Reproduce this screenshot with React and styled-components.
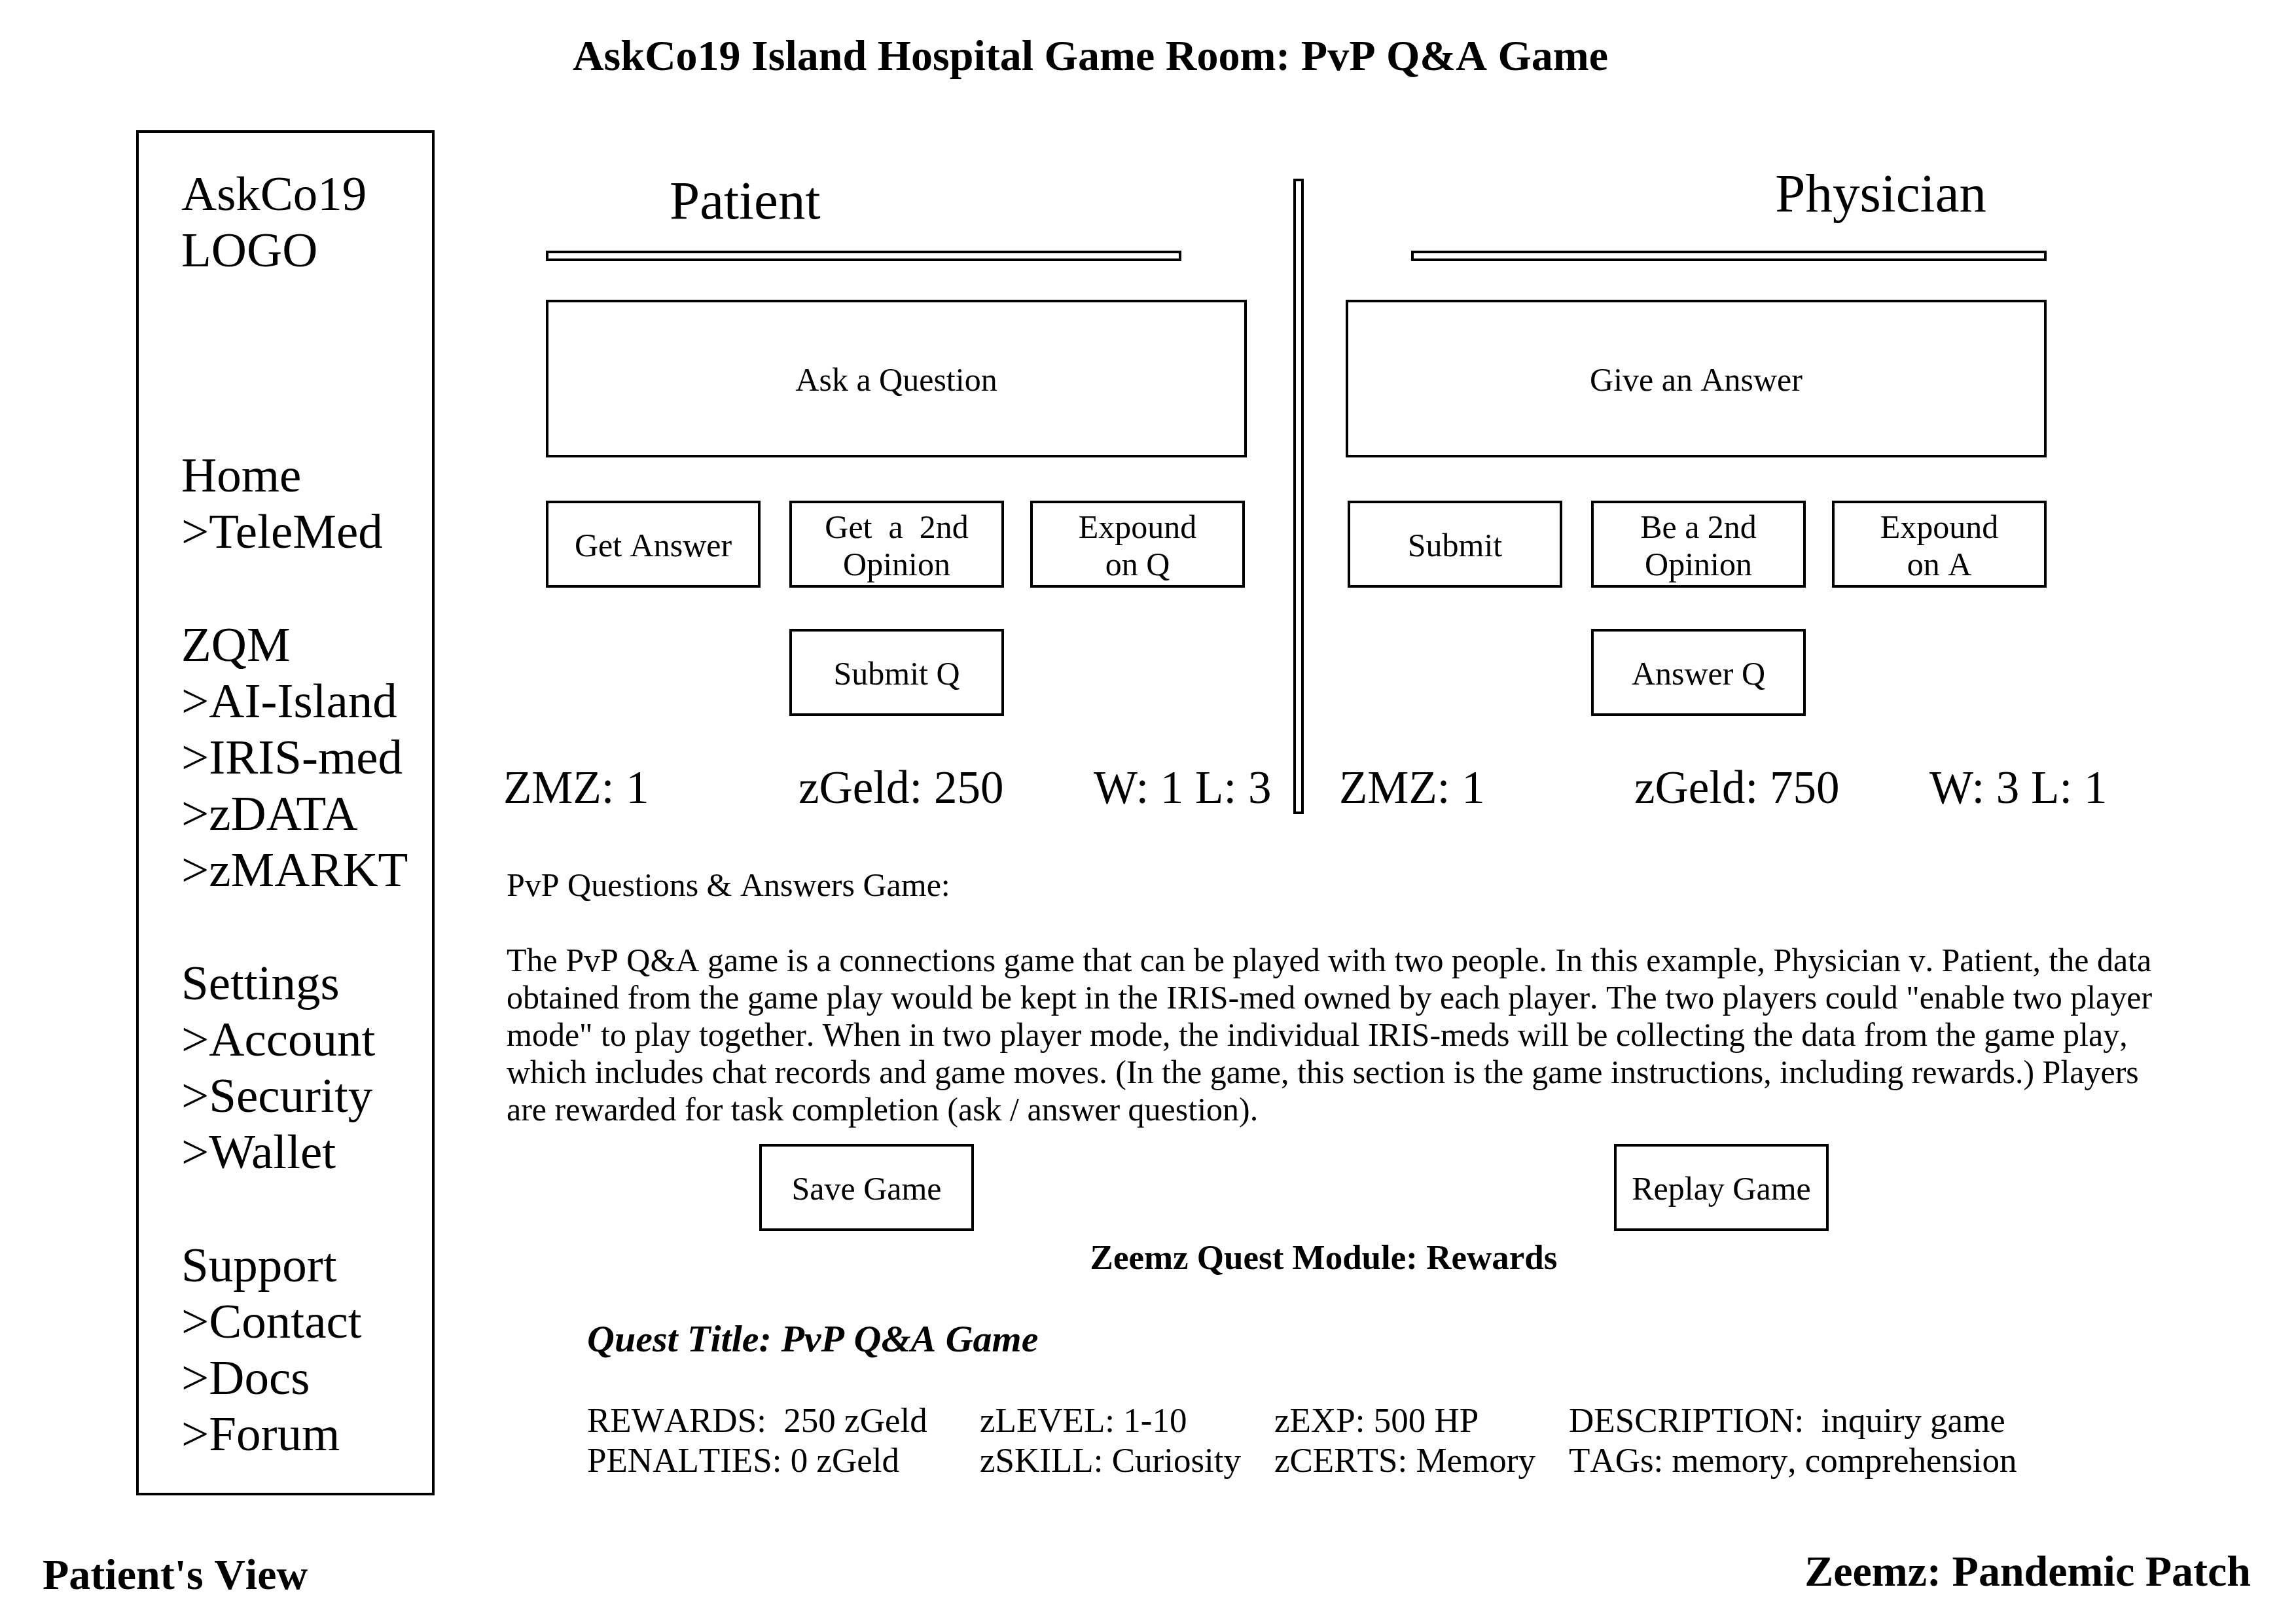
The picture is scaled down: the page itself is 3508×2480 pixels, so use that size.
import React from "react";
import styled, { createGlobalStyle } from "styled-components";

const GlobalStyle = createGlobalStyle`
  *, *::before, *::after { box-sizing: border-box; }
  body {
    margin: 0;
    background: #fff;
    color: #000;
    font-family: "Liberation Serif", "Times New Roman", serif;
    font-size: 50px;
    font-kerning: none;
    line-height: 57px;
  }
  h1, h2, h3, p, ul, dl, dd { margin: 0; padding: 0; }
`;

const Page = styled.div`
  display: flex;
  flex-direction: column;
  min-height: 100vh;
`;

const PageTitle = styled.h1`
  padding: 47px 176px 0 0;
  font-size: 66px;
  line-height: 76px;
  text-align: center;
`;

const Body = styled.div`
  display: flex;
  align-items: stretch;
  margin-top: 76px;
  padding: 0 190px 0 208px;
`;

const Sidebar = styled.nav`
  flex: 0 0 456px;
  padding: 50px 0 47px 65px;
  border: 4px solid #000;
  font-size: 75px;
  font-kerning: normal;
  line-height: 86px;
`;

const Brand = styled.div`
  width: min-content;
  margin-bottom: 258px;
`;

const NavGroup = styled.ul`
  list-style: none;
  & + & { margin-top: 87px; }
`;

const NavLink = styled.a`
  display: block;
  color: inherit;
  text-decoration: none;
  white-space: nowrap;
`;

const Main = styled.main`
  flex: 1;
  min-width: 0;
  padding: 55px 0 0 105px;
`;

const Board = styled.div`
  display: grid;
  grid-template-columns: 1207fr 16px 1261fr;
  margin-right: 65px;
`;

const Divider = styled.div`
  margin-top: 19px;
  border: 4px solid #000;
`;

const Panel = styled.section`
  padding-left: ${(p) => (p.$side === "right" ? "54px" : "0")};
`;

const Controls = styled.div`
  display: flex;
  flex-direction: column;
  padding: ${(p) => (p.$side === "right" ? "0 126px 0 10px" : "0 71px 0 65px")};
`;

const PanelHeader = styled.header`
  display: flex;
  height: 93px;
  align-items: ${(p) => (p.$side === "right" ? "flex-start" : "flex-end")};
  justify-content: ${(p) => (p.$side === "right" ? "flex-end" : "flex-start")};
  padding: ${(p) => (p.$side === "right" ? "0 92px 0 0" : "0 0 0 189px")};
`;

const PanelTitle = styled.h2`
  font-size: 83px;
  font-weight: 400;
  line-height: 82px;
`;

const Rule = styled.div`
  width: calc(100% - 100px);
  height: 16px;
  margin: 36px 0 59px;
  border: 4px solid #000;
  align-self: ${(p) => (p.$side === "right" ? "flex-end" : "flex-start")};
`;

const BoxButton = styled.button`
  display: flex;
  align-items: center;
  justify-content: center;
  width: 328px;
  height: 133px;
  padding: 4px 0 0;
  border: 4px solid #000;
  border-radius: 0;
  background: #fff;
  color: inherit;
  font: inherit;
  font-kerning: inherit;
  text-align: center;
  white-space: pre;
  cursor: pointer;
`;

const PromptButton = styled(BoxButton)`
  width: 100%;
  height: 241px;
`;

const ActionGrid = styled.div`
  display: grid;
  grid-template-columns: 372fr 368fr 328px;
  row-gap: 63px;
  margin: 66px 0 68px;
  padding: ${(p) => (p.$side === "right" ? "0 0 0 3px" : "0 3px 0 0")};
`;

const MiddleCell = styled.div`
  grid-column: 2;
`;

const Stats = styled.div`
  display: grid;
  grid-template-columns: 451fr 451fr 305fr;
  font-size: 71px;
  font-kerning: normal;
  line-height: 82px;
  white-space: nowrap;
`;

const Instructions = styled.section`
  margin-top: 80px;
  padding-left: 5px;
`;

const InstructionText = styled.p`
  margin-top: 58px;
`;

const GameActions = styled.div`
  display: flex;
  justify-content: space-between;
  margin-top: 24px;
  padding: 0 524px 0 391px;
`;

const ModuleTitle = styled.h2`
  margin-top: 10px;
  padding-right: 42px;
  font-size: 53px;
  line-height: 61px;
  text-align: center;
`;

const Quest = styled.section`
  margin-top: 61px;
  padding-left: 128px;
`;

const QuestTitle = styled.h3`
  font-size: 58px;
  font-style: italic;
  line-height: 66px;
`;

const QuestFacts = styled.dl`
  display: grid;
  grid-template-columns: 600fr 450fr 450fr 921fr;
  margin-top: 61px;
  font-size: 53px;
  line-height: 61px;
  white-space: pre;
`;

const Fact = styled.div`
  dt, dd { display: inline; }
`;

const Footer = styled.footer`
  display: flex;
  justify-content: space-between;
  height: 81px;
  margin: 78px 69px 36px 65px;
  font-size: 66px;
  font-weight: 700;
  line-height: 76px;
`;

const FooterText = styled.span`
  align-self: ${(p) => p.$align};
`;

const navGroups = [
  ["Home", ">TeleMed"],
  ["ZQM", ">AI-Island", ">IRIS-med", ">zDATA", ">zMARKT"],
  ["Settings", ">Account", ">Security", ">Wallet"],
  ["Support", ">Contact", ">Docs", ">Forum"],
];

const players = {
  patient: {
    side: "left",
    title: "Patient",
    prompt: "Ask a Question",
    actions: ["Get Answer", "Get  a  2nd\nOpinion", "Expound\non Q"],
    submit: "Submit Q",
    stats: ["ZMZ: 1", "zGeld: 250", "W: 1 L: 3"],
  },
  physician: {
    side: "right",
    title: "Physician",
    prompt: "Give an Answer",
    actions: ["Submit", "Be a 2nd\nOpinion", "Expound\non A"],
    submit: "Answer Q",
    stats: ["ZMZ: 1", "zGeld: 750", "W: 3 L: 1"],
  },
};

const facts = [
  ["REWARDS:", "  250 zGeld"],
  ["zLEVEL:", " 1-10"],
  ["zEXP:", " 500 HP"],
  ["DESCRIPTION:", "  inquiry game"],
  ["PENALTIES:", " 0 zGeld"],
  ["zSKILL:", " Curiosity"],
  ["zCERTS:", " Memory"],
  ["TAGs:", " memory, comprehension"],
];

function PlayerPanel({ player }) {
  const { side, title, prompt, actions, submit, stats } = player;
  return (
    <Panel $side={side}>
      <Controls $side={side}>
        <PanelHeader $side={side}>
          <PanelTitle>{title}</PanelTitle>
        </PanelHeader>
        <Rule $side={side} />
        <PromptButton type="button">{prompt}</PromptButton>
        <ActionGrid $side={side}>
          {actions.map((label) => (
            <BoxButton key={label} type="button">{label}</BoxButton>
          ))}
          <MiddleCell>
            <BoxButton type="button">{submit}</BoxButton>
          </MiddleCell>
        </ActionGrid>
      </Controls>
      <Stats>
        {stats.map((stat) => (
          <span key={stat}>{stat}</span>
        ))}
      </Stats>
    </Panel>
  );
}

export default function App() {
  return (
    <>
      <GlobalStyle />
      <Page>
        <PageTitle>AskCo19 Island Hospital Game Room: PvP Q&amp;A Game</PageTitle>
        <Body>
          <Sidebar>
            <Brand>AskCo19 LOGO</Brand>
            {navGroups.map((group) => (
              <NavGroup key={group[0]}>
                {group.map((label) => (
                  <li key={label}>
                    <NavLink href="#">{label}</NavLink>
                  </li>
                ))}
              </NavGroup>
            ))}
          </Sidebar>
          <Main>
            <Board>
              <PlayerPanel player={players.patient} />
              <Divider />
              <PlayerPanel player={players.physician} />
            </Board>
            <Instructions>
              <p>PvP Questions &amp; Answers Game:</p>
              <InstructionText>
                The PvP Q&amp;A game is a connections game that can be played with two people. In this
                example, Physician v. Patient, the data obtained from the game play would be kept in
                the IRIS-med owned by each player. The two players could "enable two player mode" to
                play together. When in two player mode, the individual IRIS-meds will be collecting
                the data from the game play, which includes chat records and game moves. (In the
                game, this section is the game instructions, including rewards.) Players are rewarded
                for task completion (ask / answer question).
              </InstructionText>
            </Instructions>
            <GameActions>
              <BoxButton type="button">Save Game</BoxButton>
              <BoxButton type="button">Replay Game</BoxButton>
            </GameActions>
            <ModuleTitle>Zeemz Quest Module: Rewards</ModuleTitle>
            <Quest>
              <QuestTitle>Quest Title: PvP Q&amp;A Game</QuestTitle>
              <QuestFacts>
                {facts.map(([name, value]) => (
                  <Fact key={name}>
                    <dt>{name}</dt>
                    <dd>{value}</dd>
                  </Fact>
                ))}
              </QuestFacts>
            </Quest>
          </Main>
        </Body>
        <Footer>
          <FooterText $align="flex-end">Patient's View</FooterText>
          <FooterText $align="flex-start">Zeemz: Pandemic Patch</FooterText>
        </Footer>
      </Page>
    </>
  );
}
